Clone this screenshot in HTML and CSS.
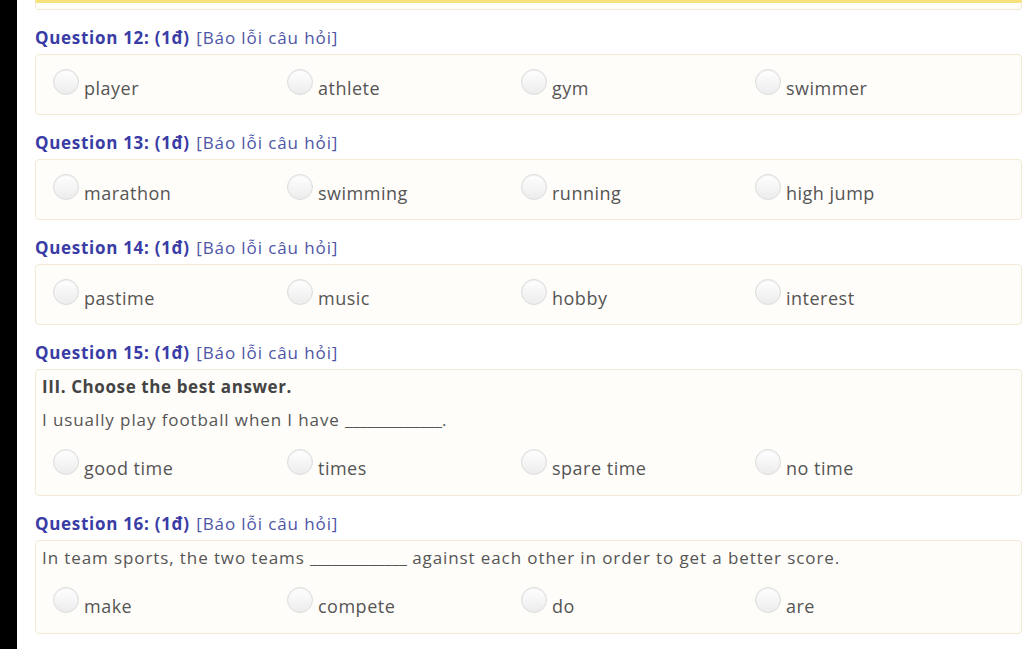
FILE: index.html
```html
<!DOCTYPE html>
<html>
<head>
<meta charset="utf-8">
<link rel="stylesheet" href="styles.css">
</head>
<body>
<div class="sidebar"></div>
<div class="main">
  <div class="prev-card"></div>

  <div class="question">
    <div class="qlabel"><b>Question 12: (1đ)</b> <span class="report">[Báo lỗi câu hỏi]</span></div>
    <div class="card">
      <div class="options">
        <label class="opt"><span class="radio"></span><span class="otext">player</span></label>
        <label class="opt"><span class="radio"></span><span class="otext">athlete</span></label>
        <label class="opt"><span class="radio"></span><span class="otext">gym</span></label>
        <label class="opt"><span class="radio"></span><span class="otext">swimmer</span></label>
      </div>
    </div>
  </div>

  <div class="question">
    <div class="qlabel"><b>Question 13: (1đ)</b> <span class="report">[Báo lỗi câu hỏi]</span></div>
    <div class="card">
      <div class="options">
        <label class="opt"><span class="radio"></span><span class="otext">marathon</span></label>
        <label class="opt"><span class="radio"></span><span class="otext">swimming</span></label>
        <label class="opt"><span class="radio"></span><span class="otext">running</span></label>
        <label class="opt"><span class="radio"></span><span class="otext">high jump</span></label>
      </div>
    </div>
  </div>

  <div class="question">
    <div class="qlabel"><b>Question 14: (1đ)</b> <span class="report">[Báo lỗi câu hỏi]</span></div>
    <div class="card">
      <div class="options">
        <label class="opt"><span class="radio"></span><span class="otext">pastime</span></label>
        <label class="opt"><span class="radio"></span><span class="otext">music</span></label>
        <label class="opt"><span class="radio"></span><span class="otext">hobby</span></label>
        <label class="opt"><span class="radio"></span><span class="otext">interest</span></label>
      </div>
    </div>
  </div>

  <div class="question">
    <div class="qlabel"><b>Question 15: (1đ)</b> <span class="report">[Báo lỗi câu hỏi]</span></div>
    <div class="card text-card">
      <p class="qtext strong">III. Choose the best answer.</p>
      <p class="qtext">I usually play football when I have <span class="blank">_____________</span>.</p>
      <div class="options">
        <label class="opt"><span class="radio"></span><span class="otext">good time</span></label>
        <label class="opt"><span class="radio"></span><span class="otext">times</span></label>
        <label class="opt"><span class="radio"></span><span class="otext">spare time</span></label>
        <label class="opt"><span class="radio"></span><span class="otext">no time</span></label>
      </div>
    </div>
  </div>

  <div class="question">
    <div class="qlabel"><b>Question 16: (1đ)</b> <span class="report">[Báo lỗi câu hỏi]</span></div>
    <div class="card text-card">
      <p class="qtext">In team sports, the two teams <span class="blank">_____________</span> against each other in order to get a better score.</p>
      <div class="options">
        <label class="opt"><span class="radio"></span><span class="otext">make</span></label>
        <label class="opt"><span class="radio"></span><span class="otext">compete</span></label>
        <label class="opt"><span class="radio"></span><span class="otext">do</span></label>
        <label class="opt"><span class="radio"></span><span class="otext">are</span></label>
      </div>
    </div>
  </div>
</div>
</body>
</html>
```

FILE: styles.css
```css
html, body {
  margin: 0;
  padding: 0;
  background: #ffffff;
  height: 649px;
  overflow: hidden;
}
body {
  display: flex;
  font-family: "Open Sans", "Noto Sans", sans-serif;
  color: #555555;
}
.sidebar {
  width: 17px;
  flex: none;
  background: #000000;
}
.main {
  flex: 1;
  padding: 0 2px 0 18px;
}
.prev-card {
  border-top: 3px solid #f6e27a;
  border-left: 1px solid #f3ead8;
  border-right: 1px solid #f3ead8;
  border-bottom: 1px solid #f1e8d6;
  border-radius: 0 0 4px 4px;
  background: #fffdf8;
  height: 6px;
}
.question {
  margin-top: 16px;
}
.qlabel {
  font-size: 17px;
  line-height: 24px;
  height: 24px;
  margin-bottom: 4px;
  white-space: nowrap;
}
.qlabel b {
  color: #3a3ca6;
  font-weight: 700;
  letter-spacing: 0.7px;
}
.report {
  color: #4d55a6;
  letter-spacing: 0.9px;
  margin-left: 2px;
}
.card {
  border: 1px solid #f3ead6;
  border-radius: 4px;
  background: #fffdf9;
  padding: 0 6px 13px 6px;
}
.card.text-card {
  padding-bottom: 14px;
}
.qtext {
  margin: 0;
  font-size: 17px;
  line-height: 33px;
  color: #555555;
  letter-spacing: 0.9px;
  white-space: nowrap;
}
.qtext.strong {
  font-weight: 700;
  color: #444444;
  letter-spacing: 0.6px;
}
.blank {
  letter-spacing: 0;
}
.options {
  display: grid;
  grid-template-columns: repeat(4, 234px);
  margin: 13px 0 0 11px;
}
.card > .options:first-child {
  margin-top: 14px;
}
.opt {
  display: flex;
  align-items: flex-start;
  height: 32px;
}
.radio {
  width: 24px;
  height: 24px;
  flex: none;
  border: 1px solid #dcdcdc;
  border-radius: 50%;
  background: linear-gradient(#ffffff, #ececec);
  box-shadow: inset 0 1px 1px rgba(0,0,0,0.06);
}
.otext {
  margin-left: 5px;
  padding-top: 6px;
  font-size: 18px;
  line-height: 26px;
  color: #555555;
  letter-spacing: 0.5px;
}
```
